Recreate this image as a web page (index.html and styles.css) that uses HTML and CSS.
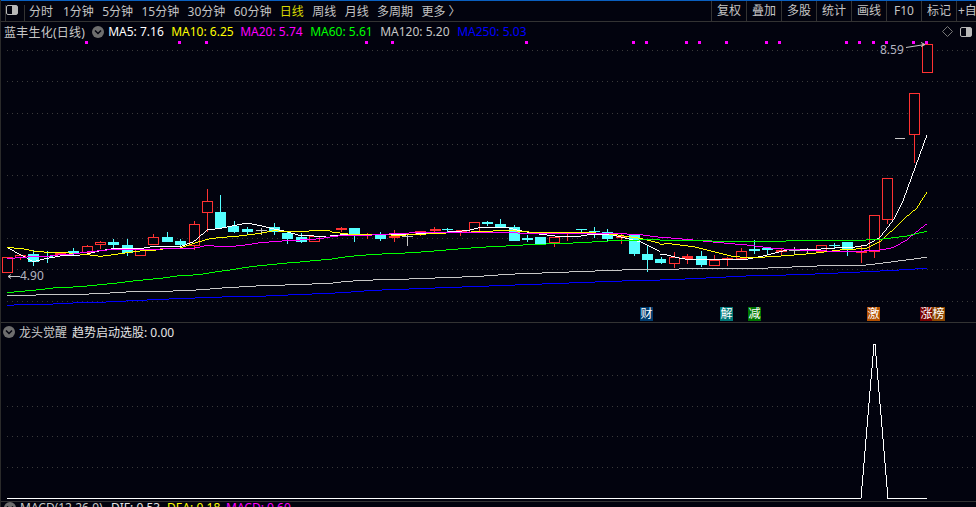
FILE: index.html
```html
<!DOCTYPE html>
<html lang="zh-CN">
<head>
<meta charset="utf-8">
<title>蓝丰生化(日线)</title>
<link rel="stylesheet" href="styles.css">
</head>
<body>
<div class="app">
  <header class="toolbar">
    <span class="panel-cell"><span class="panel-btn"><i></i></span></span>
    <nav class="periods">
      <a>分时</a><a class="second">1分钟</a><a>5分钟</a><a>15分钟</a><a>30分钟</a><a>60分钟</a><a class="active">日线</a><a>周线</a><a>月线</a><a>多周期</a><a>更多 〉</a>
    </nav>
    <nav class="tools">
      <a>复权</a><a>叠加</a><a>多股</a><a>统计</a><a>画线</a><a>F10</a><a>标记</a><a class="clip">+自</a>
    </nav>
  </header>

  <section class="panel main">
    <svg class="chart" width="976" height="300" viewBox="0 22 976 300">
      <path class="grid" d="M7 50.500H976M7 81.500H976M7 113.500H976M7 144.500H976M7 175.500H976M7 207.500H976M7 238.500H976M7 269.500H976M7 301.500H976"/>
      <path class="dots" d="M85 42.500h3M178 42.500h3M205 42.500h3M365 42.500h3M391 42.500h3M525 42.500h3M632 42.500h3M645 42.500h3M685 42.500h3M698 42.500h3M725 42.500h3M765 42.500h3M778 42.500h3M845 42.500h3M858 42.500h3M872 42.500h3M885 42.500h3M912 42.500h3M925 42.500h3"/>

      <path class="wick red" d="M20.500 255V260M60.500 252V256M87.500 245V255M100.500 241V249M140.500 248V256M153.500 234V245M194.500 221V250M207.500 189V232M341.500 227V232M367.500 233V239M394.500 230V242M420.500 231V236M434.500 227V233M460.500 230V236M554.500 237V247M567.500 233V241M621.500 233V244M674.500 252V268M687.500 254V264M714.500 255V266M727.500 257V266M741.500 248V259M781.500 248V256M861.500 246V263M874.500 215V258M887.500 178V224M914.500 93V163"/>
      <path class="wick cyan" d="M33.500 250V266M47.500 251V263M73.500 248V255M113.500 239V248M127.500 239V256M167.500 232V242M180.500 239V247M220.500 195V229M234.500 221V233M247.500 227V235M274.500 223V235M287.500 232V244M301.500 233V243M354.500 228V242M380.500 232V241M447.500 228V232M487.500 221V226M500.500 219V228M514.500 225V241M527.500 235V242M581.500 229V232M594.500 227V238M607.500 229V241M634.500 235V256M647.500 245V272M661.500 257V264M701.500 251V267M754.500 240V254M767.500 248V254M834.500 243V249M847.500 242V256"/>
      <path class="wick grey" d="M261.500 228V235M407.500 233V246M794.500 247V254M807.500 248V254"/>
      <g class="body hollow">
        <rect x="2.500" y="257.500" width="10" height="15"/>
        <rect x="15.500" y="255.500" width="10" height="2"/>
        <rect x="82.500" y="246.500" width="10" height="6"/>
        <rect x="95.500" y="242.500" width="10" height="2"/>
        <rect x="135.500" y="249.500" width="10" height="6"/>
        <rect x="148.500" y="237.500" width="10" height="7"/>
        <rect x="189.500" y="224.500" width="10" height="21"/>
        <rect x="202.500" y="201.500" width="10" height="11"/>
        <rect x="309.500" y="236.500" width="10" height="5"/>
        <rect x="415.500" y="231.500" width="10" height="3"/>
        <rect x="469.500" y="222.500" width="10" height="10"/>
        <rect x="549.500" y="237.500" width="10" height="5"/>
        <rect x="669.500" y="257.500" width="10" height="6"/>
        <rect x="709.500" y="260.500" width="10" height="5"/>
        <rect x="736.500" y="251.500" width="10" height="7"/>
        <rect x="816.500" y="245.500" width="10" height="6"/>
        <rect x="869.500" y="215.500" width="10" height="36"/>
        <rect x="882.500" y="178.500" width="10" height="41"/>
        <rect x="909.500" y="93.500" width="10" height="41"/>
        <rect x="922.500" y="44.500" width="10" height="28"/>
      </g>
      <g class="body filled-red">
        <rect x="55" y="253" width="11" height="2"/>
        <rect x="336" y="228" width="11" height="2"/>
        <rect x="363" y="234" width="11" height="1"/>
        <rect x="389" y="236" width="11" height="2"/>
        <rect x="430" y="229" width="11" height="2"/>
        <rect x="456" y="230" width="11" height="3"/>
        <rect x="616" y="236" width="11" height="2"/>
        <rect x="682" y="256" width="11" height="3"/>
        <rect x="722" y="258" width="11" height="1"/>
        <rect x="776" y="250" width="11" height="2"/>
        <rect x="856" y="251" width="11" height="2"/>
      </g>
      <g class="body filled-cyan">
        <rect x="28" y="254" width="11" height="8"/>
        <rect x="42" y="256" width="11" height="1"/>
        <rect x="68" y="251" width="11" height="2"/>
        <rect x="108" y="242" width="11" height="3"/>
        <rect x="122" y="245" width="11" height="8"/>
        <rect x="162" y="237" width="11" height="5"/>
        <rect x="175" y="241" width="11" height="4"/>
        <rect x="215" y="212" width="11" height="16"/>
        <rect x="228" y="226" width="11" height="6"/>
        <rect x="242" y="229" width="11" height="3"/>
        <rect x="269" y="227" width="11" height="5"/>
        <rect x="282" y="233" width="11" height="6"/>
        <rect x="296" y="237" width="11" height="5"/>
        <rect x="349" y="228" width="11" height="6"/>
        <rect x="375" y="235" width="11" height="4"/>
        <rect x="442" y="229" width="11" height="1"/>
        <rect x="482" y="222" width="11" height="2"/>
        <rect x="495" y="224" width="11" height="3"/>
        <rect x="509" y="227" width="11" height="14"/>
        <rect x="522" y="238" width="11" height="2"/>
        <rect x="535" y="237" width="11" height="7"/>
        <rect x="576" y="229" width="11" height="1"/>
        <rect x="589" y="231" width="11" height="1"/>
        <rect x="602" y="232" width="11" height="7"/>
        <rect x="629" y="235" width="11" height="19"/>
        <rect x="642" y="254" width="11" height="6"/>
        <rect x="655" y="259" width="11" height="4"/>
        <rect x="696" y="256" width="11" height="9"/>
        <rect x="749" y="249" width="11" height="2"/>
        <rect x="762" y="248" width="11" height="2"/>
        <rect x="829" y="245" width="11" height="1"/>
        <rect x="842" y="242" width="11" height="8"/>
      </g>
      <path class="doji" d="M256 230.500h11M402 236.500h11M789 250.500h11M802 250.500h11M895 138.500h10"/>

      <g class="lines-l">
        <polyline class="ma5" points="22,203 100,245 141,235 181,228 220,228 262,222 301,212 341,206 421,206 460,199 541,200 581,185 622,150 661,145 701,137 742,129 781,137 821,147 861,155 901,167 941,168 990,172"/>
        <polyline class="ma10" points="22,203 61,205 100,213 141,217 181,217 220,220 262,224 301,229 341,224 381,218 421,213 460,211 502,205 541,204 581,190 622,178 661,172 701,170 742,165 781,160 821,152 861,155 901,155 941,152 990,152"/>
        <polyline class="ma20" points="22,237 61,232 100,230 141,229 181,224 220,222 262,216 301,212 341,208 381,208 421,208 460,208 502,206 541,206 581,205 622,196 661,200 701,199 742,194 781,188 821,185 861,182 901,180 941,178 990,172"/>
        <polyline class="ma60" points="22,338 61,334 100,331 160,324 200,322 240,320 280,316 320,312 360,308 400,303 450,298 490,294 530,288 570,286 610,282 650,275 690,270 720,265 770,258 810,254 850,250 900,246 950,241 990,238"/>
        <polyline class="ma120" points="22,346 200,344 300,341 380,336 450,335 520,333 610,329 650,325 680,323 770,318 830,316 910,313 990,310"/>
        <polyline class="ma250" points="22,376 60,374 160,372 240,368 320,366 400,362 480,358 560,355 640,352 720,349 800,348 910,343 990,340"/>
      </g>
      <g class="lines-m">
        <polyline class="ma5" points="0,108 50,103 130,105 210,105 290,100 370,95 410,92 450,83 530,82 570,92 610,100 690,110 740,110 770,105 850,105 930,125 990,155"/>
        <polyline class="ma10" points="0,95 50,102 130,103 210,106 290,102 370,98 450,95 530,91 610,97 690,97 770,97 850,103 930,115 990,130"/>
        <polyline class="ma20" points="0,110 50,106 130,105 210,100 290,97 370,97 450,97 530,97 610,102 690,102 770,100 850,100 930,104 990,112"/>
        <polyline class="ma60" points="0,178 50,170 130,163 210,160 290,155 370,148 450,142 530,138 610,133 690,131 770,127 850,122 930,120 990,120"/>
        <polyline class="ma120" points="0,250 50,244 130,240 210,238 290,235 370,232 450,229 530,223 610,220 690,217 770,214 850,211 930,208 990,208"/>
        <polyline class="ma250" points="0,280 50,277 130,271 210,268 290,265 370,262 450,259 530,256 610,253 690,250 770,247 850,244 930,241 990,241"/>
      </g>
      <g class="lines-r">
        <polyline class="ma5" points="60,165 80,165 120,175 160,180 240,180 320,178 360,170 400,160 440,150 520,150 560,145 640,142 680,135 720,112 760,60 790,0 861,-195"/>
        <polyline class="ma10" points="60,135 80,130 160,140 200,150 240,160 280,170 320,172 360,172 440,167 520,160 600,150 680,145 720,125 760,88 800,50 830,25 861,-24"/>
        <polyline class="ma20" points="60,112 80,113 160,120 240,128 320,135 400,145 480,150 560,153 640,155 720,150 760,143 800,120 830,95 860,72"/>
        <polyline class="ma60" points="60,121 160,122 320,125 440,123 600,122 680,120 720,118 760,113 800,108 860,94"/>
        <polyline class="ma120" points="60,208 120,207 360,205 480,200 560,197 680,195 760,185 860,172"/>
        <polyline class="ma250" points="60,240 160,236 320,228 480,224 640,217 760,211 860,205"/>
      </g>
      <path class="arrow" d="M906 47.500L925 44.500M921 42.500L925 44.500L921 46.500M8 276.500H20M8 276.500L11 274.500M8 276.500L11 278.500"/>
    </svg>

    <div class="legend">
      <span class="name">蓝丰生化(日线)</span>
      <span class="chev"><svg width="12" height="12" viewBox="0 0 12 12"><path d="M3 4.500L6 7.500L9 4.500"/></svg></span>
      <span class="v ma5-t">MA5: 7.16</span>
      <span class="v ma10-t">MA10: 6.25</span>
      <span class="v ma20-t">MA20: 5.74</span>
      <span class="v ma60-t">MA60: 5.61</span>
      <span class="v ma120-t">MA120: 5.20</span>
      <span class="v ma250-t">MA250: 5.03</span>
    </div>
    <div class="corner">
      <svg width="11" height="11" viewBox="0 0 11 11"><path class="diamond" d="M5.500 .5L10.500 5.500L5.500 10.500L.5 5.500Z"/></svg>
      <span class="panel-btn small"><i></i></span>
    </div>
    <span class="price hi">8.59</span>
    <span class="price lo">4.90</span>
    <span class="tag t-cai">财</span>
    <span class="tag t-jie">解</span>
    <span class="tag t-jian">减</span>
    <span class="tag t-ji">激</span>
    <span class="tag t-zhang">涨</span>
    <span class="tag t-bang">榜</span>
  </section>

  <section class="panel sub">
    <svg class="chart" width="976" height="178" viewBox="0 323 976 178">
      <path class="grid" d="M7 375.500H976M7 406.500H976M7 436.500H976M7 467.500H976"/>
      <path class="signal" d="M7 498.500H861L874 344H875L888 498.500H927"/>
    </svg>
    <div class="legend">
      <span class="chev"><svg width="12" height="12" viewBox="0 0 12 12"><path d="M3 4.500L6 7.500L9 4.500"/></svg></span>
      <span class="name">龙头觉醒</span>
      <span class="v bright">趋势启动选股: 0.00</span>
    </div>
  </section>

  <section class="macd">
    <span class="chev"><svg width="12" height="12" viewBox="0 0 12 12"><path d="M3 4.500L6 7.500L9 4.500"/></svg></span>
    <span class="name m-name">MACD(12,26,9)</span>
    <span class="v bright m-dif">DIF: 0.53</span>
    <span class="v m-dea">DEA: 0.18</span>
    <span class="v m-macd">MACD: 0.60</span>
  </section>
</div>
</body>
</html>
```

FILE: styles.css
```css
* { box-sizing: border-box; }
html, body { margin: 0; padding: 0; background: #02030e; }
body { font-family: "Noto Sans", "Noto Sans CJK SC", sans-serif; font-size: 12px; color: #c8c8c8; }
.app { width: 976px; height: 507px; overflow: hidden; border-left: 1px solid #2a2a2a; position: relative; display: flex; flex-direction: column; }

.toolbar { height: 22px; flex: none; border-top: 1px solid #0a5fbf; border-bottom: 1px solid #333; display: flex; align-items: center; white-space: nowrap; color: #c4c4c4; overflow: hidden; }
.panel-cell { width: 20px; height: 16px; margin-left: 4px; align-self: flex-end; border-left: 1px solid #333; border-right: 1px solid #333; flex: none; display: flex; align-items: flex-start; }
.panel-btn { width: 12px; height: 10px; border: 1px solid #b8b8b8; border-radius: 2px; display: flex; justify-content: flex-end; flex: none; }
.panel-cell .panel-btn { margin-left: 0; }
.panel-btn i { width: 5px; background: #b8b8b8; }
.periods { display: flex; margin-left: 4px; gap: 8.400px; flex: 1; }
.periods a { display: block; }
.periods .second { margin-left: 1.500px; }
.periods .active { color: #d8d800; }
.tools { display: flex; width: 265px; flex: none; }
.tools a { width: 35px; text-align: center; border-left: 1px solid #333; height: 20px; line-height: 20px; flex: none; }
.tools .clip { width: 20px; text-align: left; padding-left: 1px; }

.panel { position: relative; flex: none; }
.main { height: 301px; border-bottom: 1px solid #333; }
.sub { height: 179px; border-bottom: 1px solid #333; }
.chart { display: block; margin-left: -1px; }
.grid { stroke: #3a3a3a; stroke-width: 1; stroke-dasharray: 1 4; fill: none; }
.dots { stroke: #ff00ff; stroke-width: 3; fill: none; }
.wick { stroke-width: 1; fill: none; }
.wick.red { stroke: #ff3232; }
.wick.cyan { stroke: #54ffff; }
.wick.grey { stroke: #c8c8c8; }
.body rect { shape-rendering: crispEdges; }
.hollow rect { fill: #02030e; stroke: #ff3232; stroke-width: 1; }
.filled-red rect { fill: #ff3232; }
.filled-cyan rect { fill: #54ffff; }
.doji { stroke: #c8c8c8; stroke-width: 1; fill: none; }

.lines-l { transform: translate(0, 180px) scale(.33333); }
.lines-m { transform: translate(330px, 200px) scale(.33333); }
.lines-r { transform: translate(640px, 200px) scale(.33333); }
polyline { fill: none; stroke-width: 3; shape-rendering: crispEdges; }
.ma5 { stroke: #ffffff; }
.ma10 { stroke: #ffff00; }
.ma20 { stroke: #ff00ff; }
.ma60 { stroke: #00ff00; }
.ma120 { stroke: #c8c8c8; }
.ma250 { stroke: #0000ff; }
.arrow { stroke: #c8c8c8; stroke-width: 1; fill: none; }
.signal { stroke: #fff; stroke-width: 1; fill: none; shape-rendering: crispEdges; }

.legend { position: absolute; left: 3px; top: 0; height: 19px; display: flex; align-items: center; white-space: nowrap; }
.main .name { letter-spacing: .25px; }
.chev { width: 12px; height: 12px; border-radius: 50%; background: #6e6e6e; flex: none; display: block; }
.chev svg { display: block; }
.chev path { fill: none; stroke: #02030e; stroke-width: 1.500; }
.main .chev { margin: 0 4px 0 7px; }
.sub .legend { left: 2px; height: 17px; }
.sub .chev { margin-right: 4px; }
.sub .name { margin-right: 5px; }
.v { display: block; }
.bright { color: #e4e4e4; }
.ma5-t { color: #fff; width: 63px; }
.ma10-t { color: #ff0; width: 69px; }
.ma20-t { color: #f0f; width: 70px; }
.ma60-t { color: #0f0; width: 70px; }
.ma120-t { color: #c8c8c8; width: 77px; }
.ma250-t { color: #0000ff; }

.corner { position: absolute; right: 4px; top: 4px; display: flex; gap: 7px; align-items: center; }
.diamond { fill: none; stroke: #777; stroke-width: 1; }

.price { position: absolute; color: #b4b4c0; line-height: 14px; }
.price.hi { left: 879px; top: 21px; }
.price.lo { left: 19px; top: 247px; }
.tag { position: absolute; top: 285px; width: 13px; height: 14px; line-height: 13px; text-align: center; color: #fff; }
.t-cai { left: 639px; background: #003c6e; }
.t-jie { left: 719px; background: #007878; }
.t-jian { left: 747px; background: #007800; }
.t-ji { left: 866px; background: #b45000; }
.t-zhang { left: 919px; background: #780000; }
.t-bang { left: 931px; background: #8c4600; }

.macd { height: 14px; flex: none; display: flex; align-items: flex-start; white-space: nowrap; padding-left: 3px; line-height: 12px; }
.m-name { margin-left: 4px; width: 91px; }
.m-dif { width: 56px; }
.m-dea { width: 59px; color: #ff0; }
.m-macd { color: #f0f; }
```
